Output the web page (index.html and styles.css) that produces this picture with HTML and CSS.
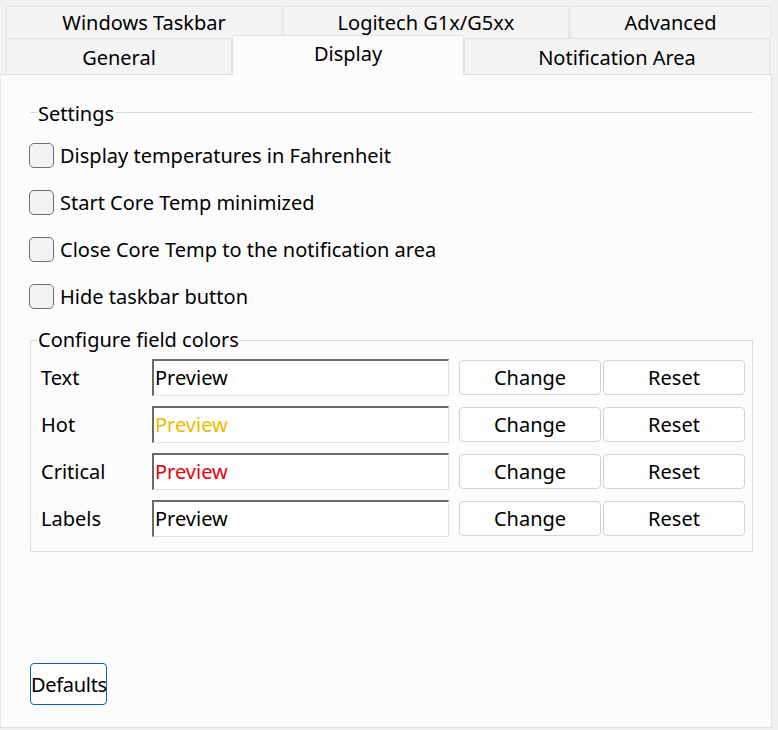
FILE: index.html
```html
<!DOCTYPE html>
<html>
<head>
    <title>Core Temp Options</title>
    <link rel="stylesheet" href="styles.css">
</head>
<body>
    <div class="tabs">
        <div class="tab-row top">
            <div class="tab w-taskbar">Windows Taskbar</div>
            <div class="tab w-logitech">Logitech G1x/G5xx</div>
            <div class="tab w-advanced">Advanced</div>
        </div>
        <div class="tab-row bottom">
            <div class="tab w-general">General</div>
            <div class="tab w-display active">Display</div>
            <div class="tab w-notify">Notification Area</div>
        </div>
    </div>

    <div class="panel">
        <div class="section-title">
            <span class="line short"></span>
            <span class="title-text">Settings</span>
            <span class="line"></span>
        </div>

        <div class="checks">
            <label class="check"><span class="box"></span>Display temperatures in Fahrenheit</label>
            <label class="check"><span class="box"></span>Start Core Temp minimized</label>
            <label class="check"><span class="box"></span>Close Core Temp to the notification area</label>
            <label class="check"><span class="box"></span>Hide taskbar button</label>
        </div>

        <fieldset class="colors">
            <legend>Configure field colors</legend>
            <div class="color-row">
                <span class="field-label">Text</span>
                <span class="preview">Preview</span>
                <button class="btn">Change</button>
                <button class="btn">Reset</button>
            </div>
            <div class="color-row">
                <span class="field-label">Hot</span>
                <span class="preview hot">Preview</span>
                <button class="btn">Change</button>
                <button class="btn">Reset</button>
            </div>
            <div class="color-row">
                <span class="field-label">Critical</span>
                <span class="preview critical">Preview</span>
                <button class="btn">Change</button>
                <button class="btn">Reset</button>
            </div>
            <div class="color-row">
                <span class="field-label">Labels</span>
                <span class="preview">Preview</span>
                <button class="btn">Change</button>
                <button class="btn">Reset</button>
            </div>
        </fieldset>

        <button class="btn defaults">Defaults</button>
    </div>
</body>
</html>
```

FILE: styles.css
```css
body {
    margin: 0;
    background-color: #f0f0f0;
    font-family: "Noto Sans", "Open Sans", sans-serif;
    font-size: 20px;
    color: #000;
}

/* --- tabs --- */
.tabs {
    padding-top: 6px;
    padding-left: 6px;
}

.tab-row {
    display: flex;
}

.tab-row.top {
    gap: 1px;
    height: 32px;
}

.tab-row.bottom {
    height: 36px;
}

.tab {
    box-sizing: border-box;
    display: flex;
    align-items: center;
    justify-content: center;
    background-color: #f4f4f4;
    border: 1px solid #e2e2e2;
    border-bottom: none;
    white-space: nowrap;
}

.tab-row.bottom .tab {
    padding-top: 2px;
}

.tab.active {
    background-color: #fbfbfb;
    margin-top: -3px;
    height: 40px;
    padding-top: 0;
    padding-bottom: 6px;
    position: relative;
    z-index: 2;
}

.w-taskbar { width: 276px; }
.w-logitech { width: 286px; }
.w-advanced { width: 201px; }
.w-general { width: 226px; }
.w-display { width: 232px; }
.w-notify { width: 306px; }

/* --- panel --- */
.panel {
    box-sizing: border-box;
    width: 772px;
    height: 654px;
    background-color: #fcfcfd;
    border: 1px solid #dedede;
    border-left-color: #e6e6e6;
    padding: 26px 18px 22px 28px;
    display: flex;
    flex-direction: column;
}

.section-title {
    display: flex;
    align-items: center;
    height: 24px;
    margin-left: 1px;
}

.line {
    flex: 1;
    height: 0;
    border-top: 1px solid #d8d8d8;
    border-bottom: 1px solid #ffffff;
}

.line.short {
    flex: none;
    width: 8px;
}

.title-text {
    padding-right: 1px;
}

.checks {
    margin-top: 7px;
}

.check {
    display: flex;
    align-items: center;
    height: 47px;
}

.box {
    box-sizing: border-box;
    width: 25px;
    height: 25px;
    margin-right: 6px;
    border: 1px solid #6e6e6e;
    border-radius: 5px;
    background-color: #f3f3f3;
}

/* --- field colors --- */
.colors {
    margin: 8px 0 0 1px;
    padding: 7px 7px 15px 10px;
    border: 1px solid #dcdcdc;
    display: flex;
    flex-direction: column;
    gap: 11px;
}

.colors legend {
    padding: 0 1px;
    margin-left: -4px;
    line-height: 24px;
}

.color-row {
    display: flex;
    align-items: center;
    height: 36px;
}

.field-label {
    width: 111px;
}

.preview {
    box-sizing: border-box;
    width: 297px;
    height: 37px;
    display: flex;
    align-items: center;
    padding-left: 1px;
    background-color: #fff;
    border-top: 2px solid #6a6a6a;
    border-left: 2px solid #6a6a6a;
    border-right: 1px solid #e3e3e3;
    border-bottom: 1px solid #e3e3e3;
}

.preview.hot {
    color: #f2b800;
}

.preview.critical {
    color: #e8000d;
}

.btn {
    box-sizing: border-box;
    font-family: inherit;
    font-size: inherit;
    color: #000;
    background-color: #fdfdfd;
    border: 1px solid #d3d3d3;
    border-radius: 4px;
    width: 142px;
    height: 35px;
    padding: 0;
    margin-left: 2px;
    white-space: nowrap;
}

.field-label + .preview + .btn {
    margin-left: 10px;
}

.defaults {
    margin-top: auto;
    margin-left: 1px;
    width: 77px;
    height: 42px;
    background-color: #fdfdfd;
    border-color: #0a64b0;
    letter-spacing: -0.3px;
}
```
